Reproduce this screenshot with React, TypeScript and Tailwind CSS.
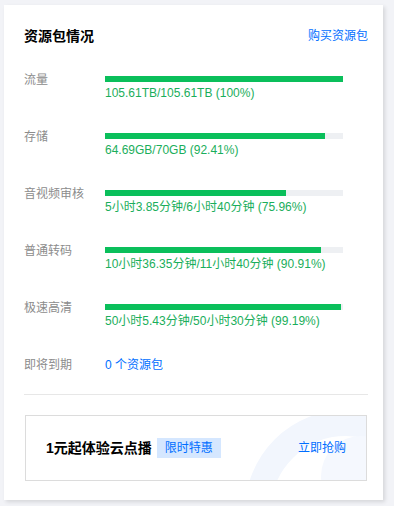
import React from "react";

const rows = [
  { label: "流量", pct: 100, text: "105.61TB/105.61TB (100%)" },
  { label: "存储", pct: 92.41, text: "64.69GB/70GB (92.41%)" },
  { label: "音视频审核", pct: 75.96, text: "5小时3.85分钟/6小时40分钟 (75.96%)" },
  { label: "普通转码", pct: 90.91, text: "10小时36.35分钟/11小时40分钟 (90.91%)" },
  { label: "极速高清", pct: 99.19, text: "50小时5.43分钟/50小时30分钟 (99.19%)" },
];

const font = { fontFamily: '"Liberation Sans", "Noto Sans CJK SC", sans-serif' };

export default function App() {
  return (
    <div className="w-[394px] h-[506px] bg-[#f2f3f7] overflow-hidden" style={font}>
      <div className="ml-[4px] mt-[5px] w-[379px] h-[495px] bg-white shadow-[2px_2px_4px_rgba(0,0,0,0.12)] pl-[20px] pr-[15px] pt-[21px]">
        <div className="flex items-center justify-between h-[20px]">
          <div className="text-[14px] font-bold text-black leading-[20px]">资源包情况</div>
          <div className="text-[12px] text-[#006eff] leading-[20px]">购买资源包</div>
        </div>
        <div className="mt-[25px] flex flex-col gap-[26px]">
          {rows.map((r) => (
            <div key={r.label} className="flex">
              <div className="w-[81px] shrink-0 text-[12px] leading-[18px] text-[#8c8c8c]">{r.label}</div>
              <div className="flex flex-col pt-[5px]">
                <div className="w-[238px] h-[6px] bg-[#eef0f3]">
                  <div className="h-full bg-[#0abf5b]" style={{ width: `${r.pct}%` }} />
                </div>
                <div className="mt-[2px] text-[12px] leading-[18px] text-[#1aae5b] whitespace-nowrap">{r.text}</div>
              </div>
            </div>
          ))}
          <div className="flex">
            <div className="w-[81px] shrink-0 text-[12px] leading-[18px] text-[#8c8c8c]">即将到期</div>
            <div className="text-[12px] leading-[18px] text-[#006eff]">0 个资源包</div>
          </div>
        </div>
        <div className="mt-[20px] h-px bg-[#e7e7e7]" />
        <div className="mt-[20px] ml-[1px] mr-[1px] h-[66px] border border-[#dcdcdc] relative overflow-hidden flex items-center pl-[20px] pr-[20px]">
          <svg className="absolute left-0 top-0" width="342" height="64" viewBox="0 0 342 64">
            <circle cx="320" cy="95" r="88" fill="none" stroke="#f2f6fd" strokeWidth="26" />
            <circle cx="335" cy="60" r="40" fill="#f5f8fe" />
          </svg>
          <div className="relative text-[14px] font-bold text-black leading-[20px]">1元起体验云点播</div>
          <div className="relative ml-[5px] h-[20px] px-[8px] bg-[#d5e7ff] text-[12px] leading-[20px] text-[#006eff]">限时特惠</div>
          <div className="relative ml-auto text-[12px] leading-[20px] text-[#006eff]">立即抢购</div>
        </div>
      </div>
    </div>
  );
}
